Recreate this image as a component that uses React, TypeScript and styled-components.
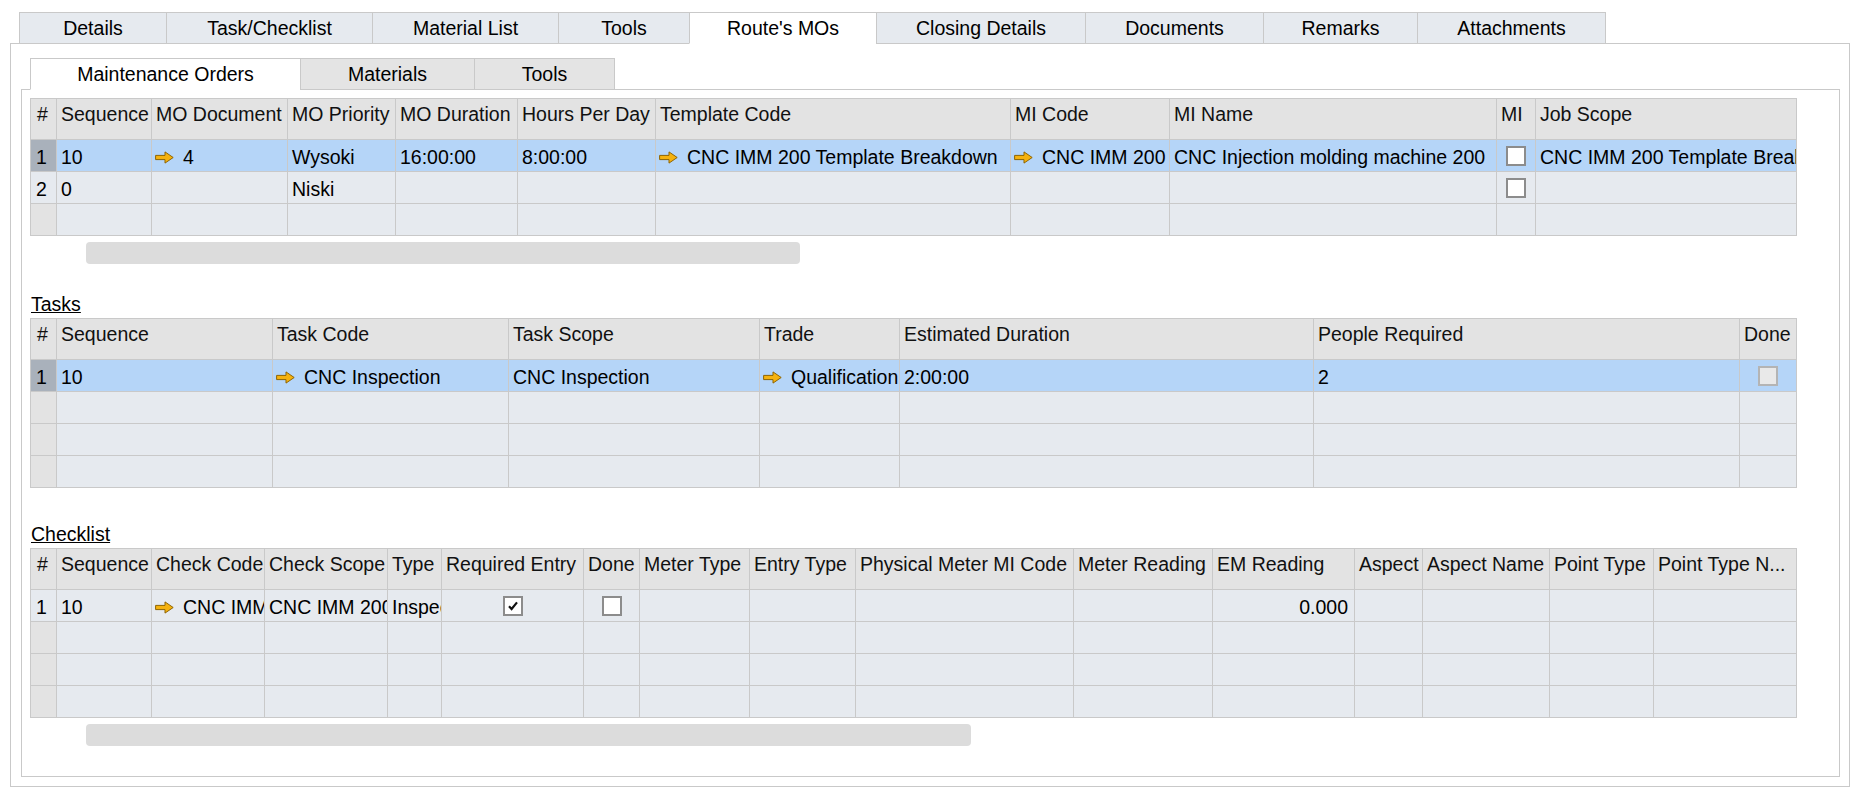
import React from "react";
import styled, { createGlobalStyle } from "styled-components";

/* - - - - - - - - - - - - - - - - - - - - - - - - - - - - - - - -
- Route's MOs 화면 (탭 + 그리드 3개)
- - - - - - - - - - - - - - - - - - - - - - - - - - - - - - - - -*/

const LINE = "#c9c9c9";
const ROW = "#e6eaef";
const ROW_SEL = "#b5d5f8";
const NUM_SEL = "#a9b1bb";
const NUM_EMPTY = "#e3e3e3";
const HEAD = "#e3e3e3";

const GlobalStyle = createGlobalStyle`
  html, body {
    margin: 0;
    padding: 0;
    background: #ffffff;
  }
  body {
    font-family: "Liberation Sans", Arial, sans-serif;
    font-size: 19.5px;
    color: #000000;
  }
  * {
    box-sizing: border-box;
  }
`;

const Page = styled.div`
  padding: 12px 0 0 10px;
`;

const Frame = styled.div`
  width: 1840px;
`;

const TabStrip = styled.div`
  display: flex;
  height: 32px;
`;

const TabLead = styled.div<{ $w: number }>`
  flex: 0 0 ${(p) => p.$w}px;
  border-bottom: 1px solid ${LINE};
`;

const TabFill = styled.div`
  flex: 1;
  border-bottom: 1px solid ${LINE};
`;

const Tab = styled.div<{ $w: number; $active?: boolean; $inner?: boolean }>`
  flex: 0 0 ${(p) => p.$w}px;
  height: 32px;
  display: flex;
  align-items: center;
  justify-content: center;
  white-space: nowrap;
  border: 1px solid ${LINE};
  border-bottom-color: ${(p) => (p.$active ? "#ffffff" : LINE)};
  background: ${(p) => (p.$active ? "#ffffff" : p.$inner ? "#e4e4e4" : "#e6eaef")};
  & + & {
    margin-left: -1px;
  }
`;

const OuterPanel = styled.div`
  height: 743px;
  border: 1px solid ${LINE};
  border-top: none;
  padding: 14px 9px 0 10px;
`;

const InnerPanel = styled.div`
  height: 687px;
  border: 1px solid ${LINE};
  border-top: none;
  padding: 8px 0 0 8px;
`;

const SectionLabel = styled.div<{ $top: number }>`
  margin-top: ${(p) => p.$top}px;
  margin-bottom: 2px;
  height: 24px;
  line-height: 24px;
  padding-left: 1px;
  text-decoration: underline;
`;

const Scrollbar = styled.div<{ $w: number }>`
  margin: 6px 0 0 56px;
  width: ${(p) => p.$w}px;
  height: 22px;
  border-radius: 4px;
  background: #dcdcdc;
`;

const Grid = styled.div<{ $cols: number[] }>`
  display: grid;
  grid-template-columns: ${(p) => p.$cols.map((c) => `${c}px`).join(" ")};
  width: ${(p) => p.$cols.reduce((a, b) => a + b, 0) + 1}px;
  border-top: 1px solid ${LINE};
  border-left: 1px solid ${LINE};
`;

const HeadCell = styled.div<{ $num?: boolean }>`
  height: 41px;
  padding: 4px 0 0 ${(p) => (p.$num ? 6 : 4)}px;
  line-height: 22px;
  background: ${HEAD};
  color: #111111;
  border-right: 1px solid ${LINE};
  border-bottom: 1px solid ${LINE};
  white-space: nowrap;
  overflow: hidden;
`;

const Cell = styled.div<{ $bg: string; $align: "left" | "center" | "right"; $num?: boolean }>`
  height: 32px;
  padding: 3px ${(p) => (p.$align === "right" ? 6 : 0)}px 0 ${(p) => (p.$num ? 5 : 4)}px;
  display: flex;
  align-items: center;
  justify-content: ${(p) =>
    p.$align === "center" ? "center" : p.$align === "right" ? "flex-end" : "flex-start"};
  background: ${(p) => p.$bg};
  border-right: 1px solid ${LINE};
  border-bottom: 1px solid ${LINE};
  white-space: nowrap;
  overflow: hidden;
  ${(p) => (p.$align === "center" ? "padding-left: 0;" : "")}
`;

const LinkWrap = styled.span`
  display: flex;
  align-items: center;
  gap: 9px;
  margin-left: -1px;
`;

const ArrowSvg = styled.svg`
  flex-shrink: 0;
  display: block;
`;

const CheckBox = styled.span<{ $disabled?: boolean }>`
  width: 20px;
  height: 20px;
  flex-shrink: 0;
  display: inline-flex;
  align-items: center;
  justify-content: center;
  margin-top: -3px;
  border: 2px solid ${(p) => (p.$disabled ? "#b4b4b4" : "#8c8c8c")};
  background: ${(p) => (p.$disabled ? "#e9e9e9" : "#ffffff")};
`;

type CellValue =
  | string
  | { link: string }
  | { check: boolean; disabled?: boolean }
  | { right: string };

interface Column {
  title: string;
  w: number;
  center?: boolean;
}

const LinkArrow = () => (
  <ArrowSvg width="19" height="13" viewBox="0 0 19 13">
    <path
      d="M0.6 4.4H10V0.9L18.2 6.5L10 12.1V8.6H0.6Z"
      fill="#f5b20f"
      stroke="#8f6400"
      strokeWidth="1"
      strokeLinejoin="round"
    />
  </ArrowSvg>
);

const renderValue = (v: CellValue) => {
  if (typeof v === "string") return v;
  if ("link" in v)
    return (
      <LinkWrap>
        <LinkArrow />
        {v.link}
      </LinkWrap>
    );
  if ("check" in v)
    return (
      <CheckBox $disabled={v.disabled}>
        {v.check && (
          <svg width="12" height="12" viewBox="0 0 12 12">
            <path d="M2 6.2L4.6 9L10 2.4" fill="none" stroke="#111" strokeWidth="2.2" />
          </svg>
        )}
      </CheckBox>
    );
  return v.right;
};

interface GridProps {
  cols: Column[];
  rows: CellValue[][];
  rowCount: number;
  selected?: number;
}

const DataGrid: React.FC<GridProps> = ({ cols, rows, rowCount, selected }) => (
  <Grid $cols={cols.map((c) => c.w)}>
    {cols.map((c, i) => (
      <HeadCell key={`h${i}`} $num={i === 0}>
        {c.title}
      </HeadCell>
    ))}
    {Array.from({ length: rowCount }).map((_, r) => {
      const row = rows[r];
      const isSel = r === selected;
      return cols.map((c, ci) => {
        const value: CellValue = row ? row[ci] : "";
        let bg = isSel ? ROW_SEL : ROW;
        if (ci === 0) bg = row ? (isSel ? NUM_SEL : ROW) : NUM_EMPTY;
        const align =
          typeof value === "object" && "right" in value ? "right" : c.center ? "center" : "left";
        return (
          <Cell key={`${r}-${ci}`} $bg={bg} $align={align} $num={ci === 0}>
            {renderValue(value)}
          </Cell>
        );
      });
    })}
  </Grid>
);

const moCols: Column[] = [
  { title: "#", w: 26 },
  { title: "Sequence", w: 95 },
  { title: "MO Document", w: 136 },
  { title: "MO Priority", w: 108 },
  { title: "MO Duration", w: 122 },
  { title: "Hours Per Day", w: 138 },
  { title: "Template Code", w: 355 },
  { title: "MI Code", w: 159 },
  { title: "MI Name", w: 327 },
  { title: "MI", w: 39, center: true },
  { title: "Job Scope", w: 261 },
];

const moRows: CellValue[][] = [
  [
    "1",
    "10",
    { link: "4" },
    "Wysoki",
    "16:00:00",
    "8:00:00",
    { link: "CNC IMM 200 Template Breakdown" },
    { link: "CNC IMM 200" },
    "CNC Injection molding machine 200",
    { check: false },
    "CNC IMM 200 Template Breakdown",
  ],
  ["2", "0", "", "Niski", "", "", "", "", "", { check: false }, ""],
];

const taskCols: Column[] = [
  { title: "#", w: 26 },
  { title: "Sequence", w: 216 },
  { title: "Task Code", w: 236 },
  { title: "Task Scope", w: 251 },
  { title: "Trade", w: 140 },
  { title: "Estimated Duration", w: 414 },
  { title: "People Required", w: 426 },
  { title: "Done", w: 57, center: true },
];

const taskRows: CellValue[][] = [
  [
    "1",
    "10",
    { link: "CNC Inspection" },
    "CNC Inspection",
    { link: "Qualification" },
    "2:00:00",
    "2",
    { check: false, disabled: true },
  ],
];

const checkCols: Column[] = [
  { title: "#", w: 26 },
  { title: "Sequence", w: 95 },
  { title: "Check Code", w: 113 },
  { title: "Check Scope", w: 123 },
  { title: "Type", w: 54 },
  { title: "Required Entry", w: 142, center: true },
  { title: "Done", w: 56, center: true },
  { title: "Meter Type", w: 110 },
  { title: "Entry Type", w: 106 },
  { title: "Physical Meter MI Code", w: 218 },
  { title: "Meter Reading", w: 139 },
  { title: "EM Reading", w: 142 },
  { title: "Aspect", w: 68 },
  { title: "Aspect Name", w: 127 },
  { title: "Point Type", w: 104 },
  { title: "Point Type N...", w: 143 },
];

const checkRows: CellValue[][] = [
  [
    "1",
    "10",
    { link: "CNC IMM 200" },
    "CNC IMM 200",
    "Inspection",
    { check: true },
    { check: false },
    "",
    "",
    "",
    "",
    { right: "0.000" },
    "",
    "",
    "",
    "",
  ],
];

const outerTabs = [
  { label: "Details", w: 148 },
  { label: "Task/Checklist", w: 207 },
  { label: "Material List", w: 187 },
  { label: "Tools", w: 132 },
  { label: "Route's MOs", w: 188, active: true },
  { label: "Closing Details", w: 210 },
  { label: "Documents", w: 179 },
  { label: "Remarks", w: 155 },
  { label: "Attachments", w: 189 },
];

const innerTabs = [
  { label: "Maintenance Orders", w: 271, active: true },
  { label: "Materials", w: 175 },
  { label: "Tools", w: 141 },
];

export default function App() {
  return (
    <>
      <GlobalStyle />
      <Page>
        <Frame>
          <TabStrip>
            <TabLead $w={9} />
            {outerTabs.map((t) => (
              <Tab key={t.label} $w={t.w} $active={t.active}>
                {t.label}
              </Tab>
            ))}
            <TabFill />
          </TabStrip>
          <OuterPanel>
            <TabStrip>
              <TabLead $w={9} />
              {innerTabs.map((t) => (
                <Tab key={t.label} $w={t.w} $active={t.active} $inner>
                  {t.label}
                </Tab>
              ))}
              <TabFill />
            </TabStrip>
            <InnerPanel>
              <DataGrid cols={moCols} rows={moRows} rowCount={3} selected={0} />
              <Scrollbar $w={714} />

              <SectionLabel $top={28}>Tasks</SectionLabel>
              <DataGrid cols={taskCols} rows={taskRows} rowCount={4} selected={0} />

              <SectionLabel $top={34}>Checklist</SectionLabel>
              <DataGrid cols={checkCols} rows={checkRows} rowCount={4} />
              <Scrollbar $w={885} />
            </InnerPanel>
          </OuterPanel>
        </Frame>
      </Page>
    </>
  );
}
